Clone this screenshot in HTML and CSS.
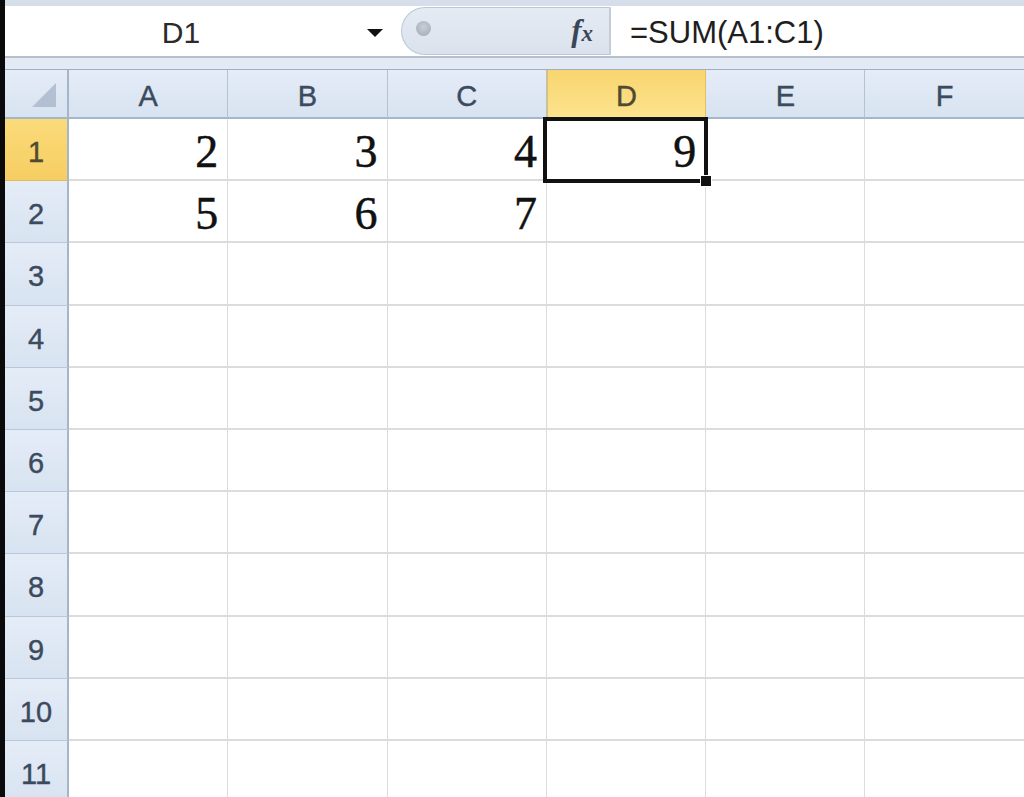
FILE: index.html
```html
<!DOCTYPE html>
<html lang="en">
<head>
  <meta charset="UTF-8">
  <title>Sheet1</title>
  <link rel="stylesheet" href="styles.css">
</head>
<body>
  <div class="window">
    <div class="edge"></div>
    <div class="main">
      <div class="top-band"></div>
      <div class="formula-bar">
        <div class="name-box">
          <span class="name">D1</span>
          <span class="drop"></span>
        </div>
        <div class="fx-box">
          <span class="grip"></span>
          <span class="fx">f<sub>x</sub></span>
        </div>
        <div class="formula">=SUM(A1:C1)</div>
      </div>
      <div class="bar-gap"></div>

      <div class="sheet">
        <div class="corner">
          <svg width="26" height="26" viewBox="0 0 26 26"><polygon points="1,25 25,1 25,25" fill="#b3c0d1"/></svg>
        </div>
        <div class="col-head">A</div>
        <div class="col-head">B</div>
        <div class="col-head">C</div>
        <div class="col-head active">D</div>
        <div class="col-head">E</div>
        <div class="col-head">F</div>

        <div class="row-head active">1</div>
        <div class="cell">2</div>
        <div class="cell">3</div>
        <div class="cell">4</div>
        <div class="cell sel">9</div>
        <div class="cell"></div>
        <div class="cell"></div>

        <div class="row-head">2</div>
        <div class="cell">5</div>
        <div class="cell">6</div>
        <div class="cell">7</div>
        <div class="cell"></div>
        <div class="cell"></div>
        <div class="cell"></div>

        <div class="row-head">3</div>
        <div class="cell"></div><div class="cell"></div><div class="cell"></div><div class="cell"></div><div class="cell"></div><div class="cell"></div>
        <div class="row-head">4</div>
        <div class="cell"></div><div class="cell"></div><div class="cell"></div><div class="cell"></div><div class="cell"></div><div class="cell"></div>
        <div class="row-head">5</div>
        <div class="cell"></div><div class="cell"></div><div class="cell"></div><div class="cell"></div><div class="cell"></div><div class="cell"></div>
        <div class="row-head">6</div>
        <div class="cell"></div><div class="cell"></div><div class="cell"></div><div class="cell"></div><div class="cell"></div><div class="cell"></div>
        <div class="row-head">7</div>
        <div class="cell"></div><div class="cell"></div><div class="cell"></div><div class="cell"></div><div class="cell"></div><div class="cell"></div>
        <div class="row-head">8</div>
        <div class="cell"></div><div class="cell"></div><div class="cell"></div><div class="cell"></div><div class="cell"></div><div class="cell"></div>
        <div class="row-head">9</div>
        <div class="cell"></div><div class="cell"></div><div class="cell"></div><div class="cell"></div><div class="cell"></div><div class="cell"></div>
        <div class="row-head">10</div>
        <div class="cell"></div><div class="cell"></div><div class="cell"></div><div class="cell"></div><div class="cell"></div><div class="cell"></div>
        <div class="row-head">11</div>
        <div class="cell"></div><div class="cell"></div><div class="cell"></div><div class="cell"></div><div class="cell"></div><div class="cell"></div>
      </div>
    </div>
  </div>
</body>
</html>
```

FILE: styles.css
```css
body {
  margin: 0;
  background-color: #ffffff;
  font-family: 'Liberation Sans', Arial, sans-serif;
  overflow: hidden;
}

.window {
  display: flex;
  height: 797px;
  overflow: hidden;
}

.edge {
  width: 5px;
  flex-shrink: 0;
  background-color: #0a0a0a;
}

.main {
  flex: 1;
  display: flex;
  flex-direction: column;
  min-width: 0;
}

.main > div {
  flex-shrink: 0;
}

/* formula bar */
.top-band {
  height: 6px;
  background-color: #d6dee9;
}

.formula-bar {
  height: 50px;
  display: flex;
  align-items: stretch;
  background-color: #ffffff;
  border-bottom: 2px solid #b7c1cd;
}

.name-box {
  width: 396px;
  display: flex;
  align-items: center;
}

.name {
  flex: 1;
  text-align: center;
  font-size: 30px;
  color: #2b2b2b;
  padding-right: 10px;
  padding-top: 3px;
}

.drop {
  width: 0;
  height: 0;
  border-left: 8px solid transparent;
  border-right: 8px solid transparent;
  border-top: 8px solid #111111;
  margin-right: 18px;
  margin-top: 4px;
}

.fx-box {
  width: 210px;
  margin: 1px 0;
  display: flex;
  align-items: center;
  justify-content: space-between;
  background: linear-gradient(#e5ebf3, #dae2ed);
  border: 1px solid #bcc7d5;
  border-right: 2px solid #c3ccd8;
  border-radius: 26px 0 0 26px;
  box-sizing: border-box;
}

.grip {
  width: 15px;
  height: 15px;
  border-radius: 50%;
  margin-left: 14px;
  margin-bottom: 6px;
  background: radial-gradient(circle at 50% 40%, #c9cfd8, #9ea8b5);
}

.fx {
  font-family: 'Liberation Serif', 'Times New Roman', serif;
  font-style: italic;
  font-weight: bold;
  font-size: 31px;
  color: #3a4658;
  margin-right: 16px;
}

.fx sub {
  font-size: 23px;
  vertical-align: 0;
}

.formula {
  flex: 1;
  display: flex;
  align-items: center;
  padding-left: 19px;
  padding-top: 3px;
  font-size: 31px;
  color: #1e1e1e;
  white-space: nowrap;
}

.bar-gap {
  height: 11px;
  background-color: #e3eaf4;
}

/* grid */
.sheet {
  display: grid;
  grid-template-columns: 64px repeat(6, 159.3px);
  grid-template-rows: 49px repeat(11, 62.2px);
  border-top: 1px solid #9fb0c4;
}

.corner,
.col-head,
.row-head {
  background: linear-gradient(#e4ecf7, #d8e3f1);
  color: #3c4a5e;
  font-size: 29px;
  display: flex;
  align-items: center;
  justify-content: center;
  box-sizing: border-box;
  -webkit-text-stroke: 0.4px #3c4a5e;
}

.corner {
  border-right: 2px solid #a6b6c9;
  border-bottom: 2px solid #a6b6c9;
  align-items: flex-end;
  justify-content: flex-end;
  padding: 0 10px 9px 0;
}

.col-head {
  border-right: 1px solid #b4c3d4;
  border-bottom: 2px solid #a6b6c9;
  padding-top: 6px;
}

.row-head {
  border-right: 2px solid #a6b6c9;
  border-bottom: 1px solid #b9c7d8;
  padding-top: 6px;
}

.col-head.active {
  background: linear-gradient(#f8d56e, #fde38e);
  border-left: 1px solid #e4bf5c;
  border-right: 1px solid #e4bf5c;
  border-bottom-color: #e4bf5c;
  color: #4f4a30;
  -webkit-text-stroke-color: #4f4a30;
}

.row-head.active {
  background: linear-gradient(#fbdb7a, #f6cd62);
  border-bottom-color: #e3bb58;
  color: #4f4a30;
  -webkit-text-stroke-color: #4f4a30;
}

.cell {
  border-right: 1px solid #dcdcdc;
  border-bottom: 2px solid #dcdcdc;
  box-sizing: border-box;
  font-family: 'Liberation Serif', 'Times New Roman', serif;
  font-size: 46px;
  line-height: 62px;
  text-align: right;
  padding-right: 9px;
  padding-top: 2px;
  color: #111111;
  -webkit-text-stroke: 0.5px #111111;
}

/* active cell outline and fill handle */
.cell.sel {
  position: relative;
  z-index: 1;
}

.cell.sel::before {
  content: "";
  position: absolute;
  left: -4px;
  top: -2px;
  right: -3px;
  bottom: -4px;
  border: 4px solid #111111;
}

.cell.sel::after {
  content: "";
  position: absolute;
  right: -7px;
  bottom: -8px;
  width: 10px;
  height: 10px;
  background-color: #111111;
  border: 1px solid #ffffff;
}
```
